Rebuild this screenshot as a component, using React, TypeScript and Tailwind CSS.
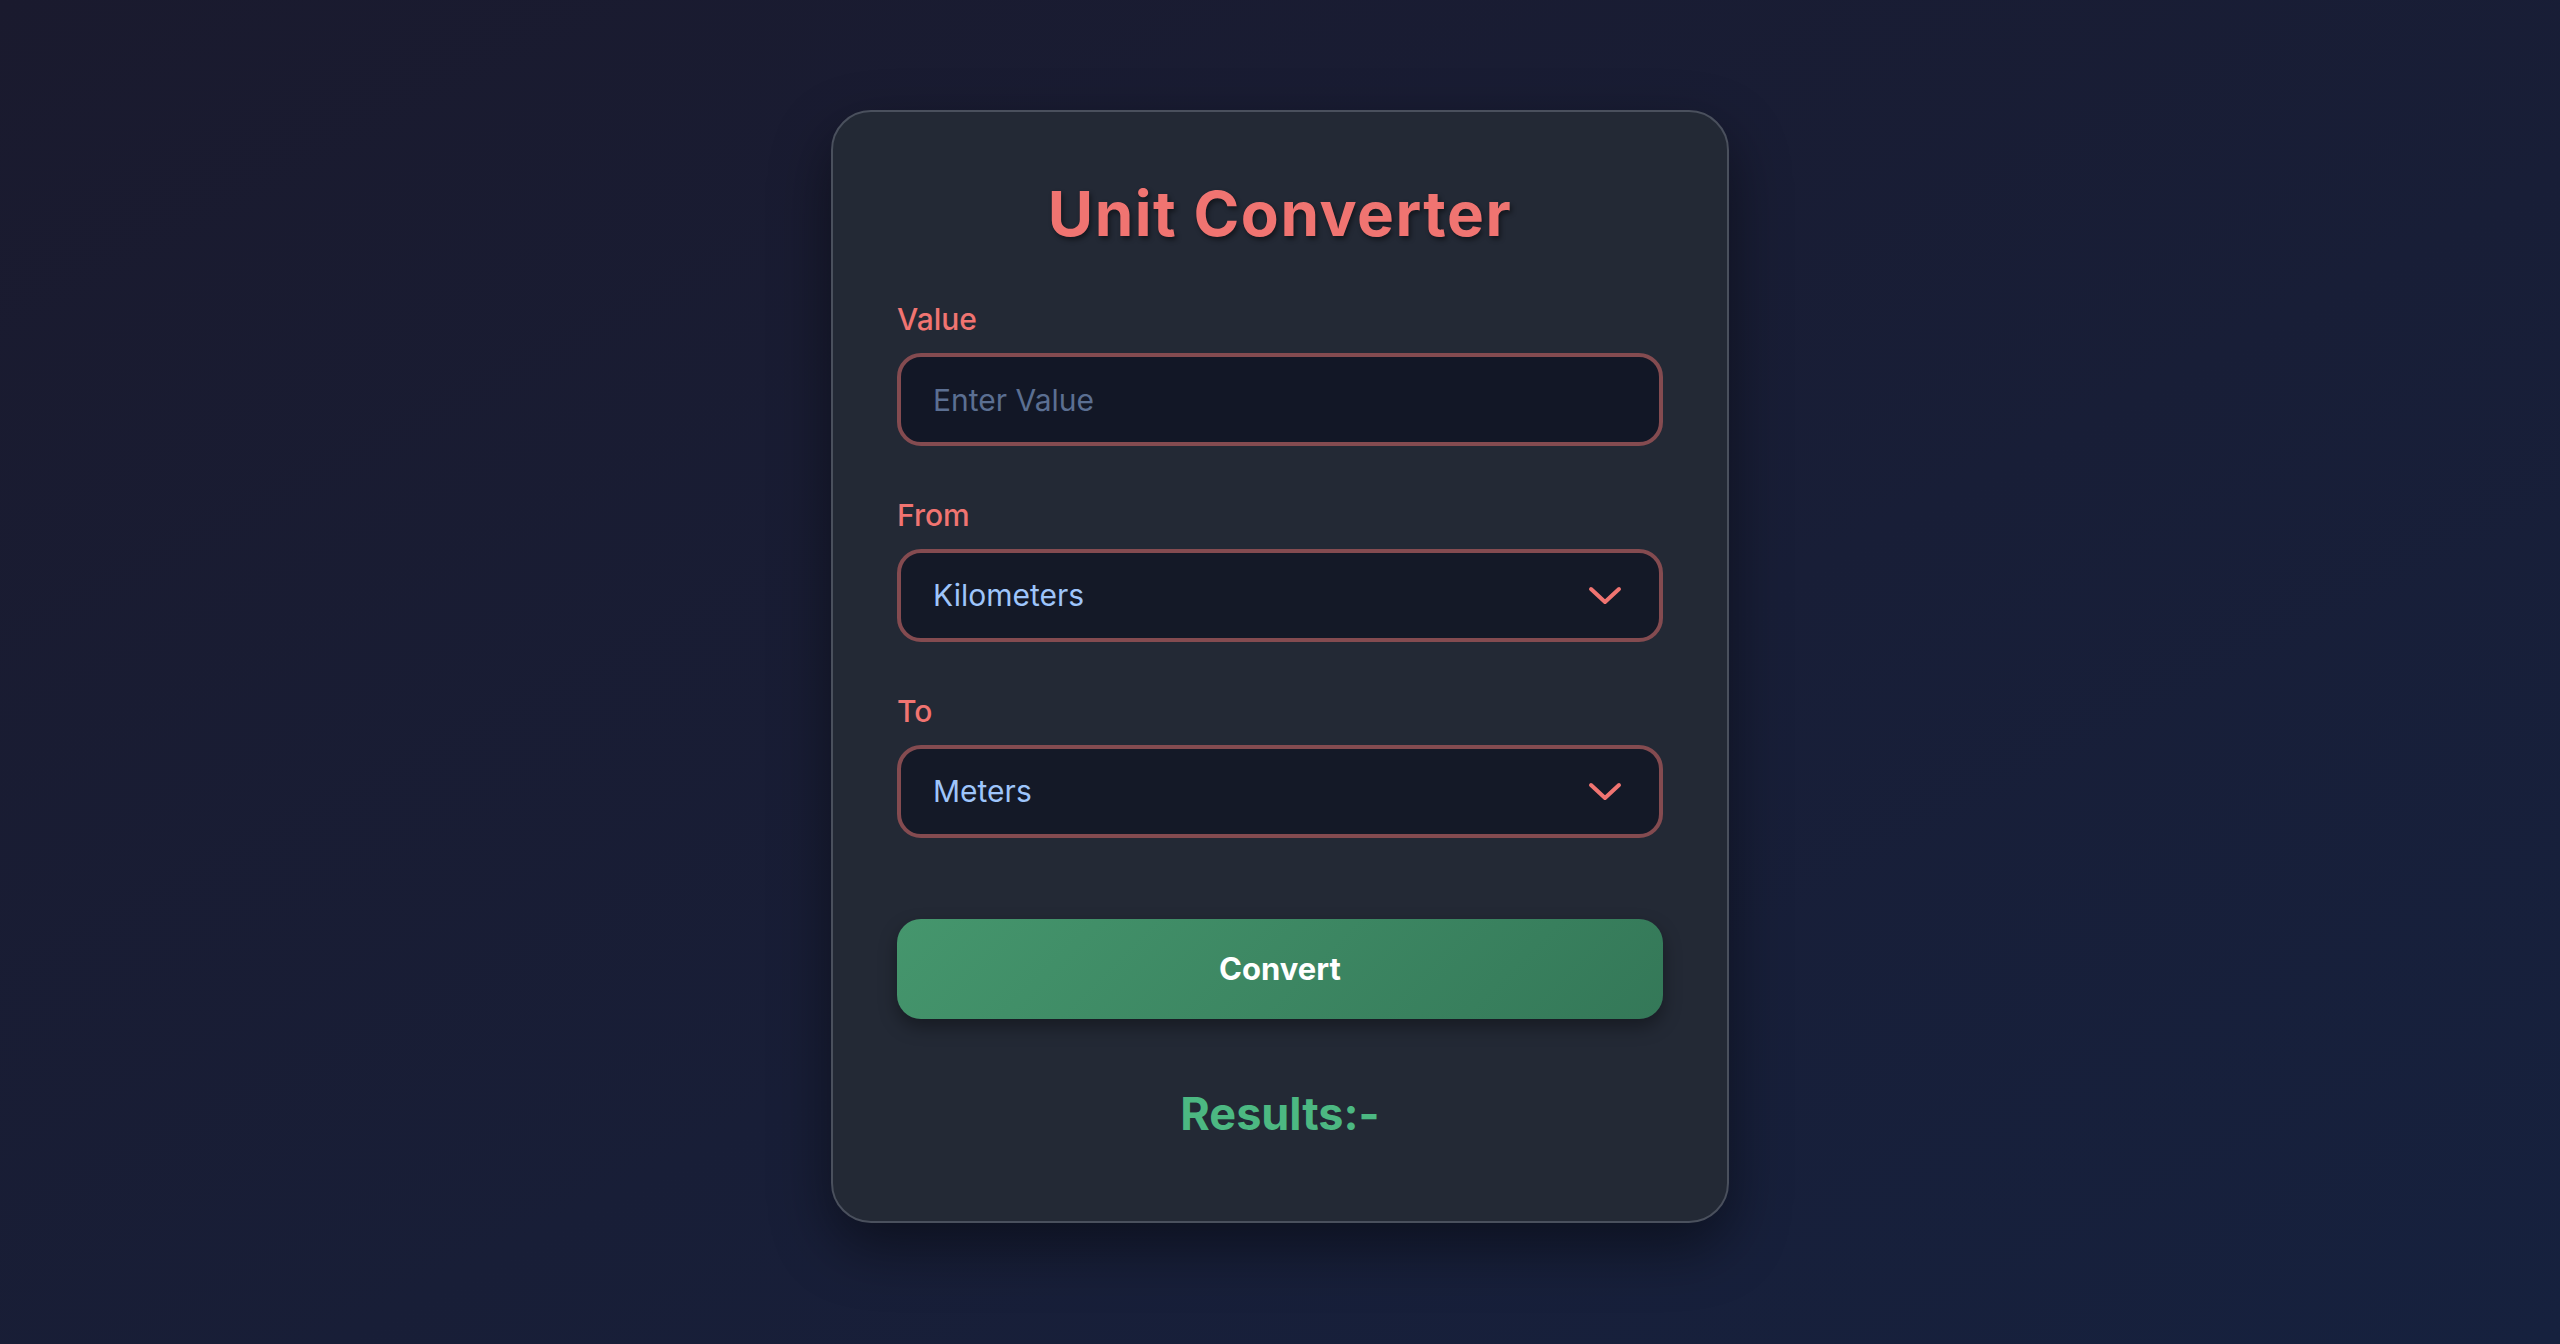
import { useState } from "react";

const units = ["Kilometers", "Meters", "Centimeters", "Millimeters", "Miles", "Yards", "Feet", "Inches"];

function Chevron() {
  return (
    <svg
      className="pointer-events-none absolute right-[41px] top-1/2 -translate-y-1/2"
      width="34"
      height="20"
      viewBox="0 0 34 20"
      fill="none"
      aria-hidden="true"
    >
      <path d="M3 3 L17 16 L31 3" stroke="#f07471" strokeWidth="4" strokeLinecap="round" strokeLinejoin="round" />
    </svg>
  );
}

function UnitSelect({ label, value, onChange }: { label: string; value: string; onChange: (v: string) => void }) {
  return (
    <div className="flex flex-col">
      <label className="text-[30px] font-medium leading-[39px] text-[#f07471]">{label}</label>
      <div className="relative mt-[14px]">
        <select
          value={value}
          onChange={(e) => onChange(e.target.value)}
          className="h-[93px] w-full appearance-none rounded-[24px] border-4 border-[#844b50] bg-[#141927] px-[32px] text-[30px] text-[#9ec5fb] outline-none"
        >
          {units.map((u) => (
            <option key={u} value={u}>
              {u}
            </option>
          ))}
        </select>
        <Chevron />
      </div>
    </div>
  );
}

export default function App() {
  const [amount, setAmount] = useState("");
  const [from, setFrom] = useState("Kilometers");
  const [to, setTo] = useState("Meters");

  return (
    <div className="min-h-screen bg-gradient-to-br from-[#1a1a2e] to-[#16213e] pt-[110px] font-['Inter',sans-serif]">
      <div className="mx-auto flex w-[898px] flex-col rounded-[40px] border-2 border-[#4a505d] bg-[#232935] px-[64px] pt-[72px] pb-[64px] shadow-[0_24px_60px_rgba(0,0,0,0.45)]">
        <h1 className="text-center text-[62px] font-bold leading-[60px] tracking-[1.5px] text-[#f07471] [text-shadow:2px_3px_5px_rgba(0,0,0,0.45)]">
          Unit Converter
        </h1>

        <div className="mt-[56px] flex flex-col">
          <label className="text-[30px] font-medium leading-[39px] text-[#f07471]">Value</label>
          <input
            value={amount}
            onChange={(e) => setAmount(e.target.value)}
            placeholder="Enter Value"
            className="mt-[14px] h-[93px] w-full rounded-[24px] border-4 border-[#844b50] bg-[#121726] px-[32px] text-[30px] text-[#9ec5fb] outline-none placeholder:text-[#5b6f92]"
          />
        </div>

        <div className="mt-[50px]">
          <UnitSelect label="From" value={from} onChange={setFrom} />
        </div>
        <div className="mt-[50px]">
          <UnitSelect label="To" value={to} onChange={setTo} />
        </div>

        <button className="mt-[81px] h-[100px] w-full rounded-[24px] bg-[linear-gradient(135deg,#45966d,#347858)] text-[31px] font-bold text-white shadow-[0_8px_18px_rgba(0,0,0,0.35)]">
          Convert
        </button>

        <p className="mt-[68px] mb-[16px] text-center text-[45px] font-bold leading-[54px] text-[#4cb882]">Results:-</p>
      </div>
    </div>
  );
}
